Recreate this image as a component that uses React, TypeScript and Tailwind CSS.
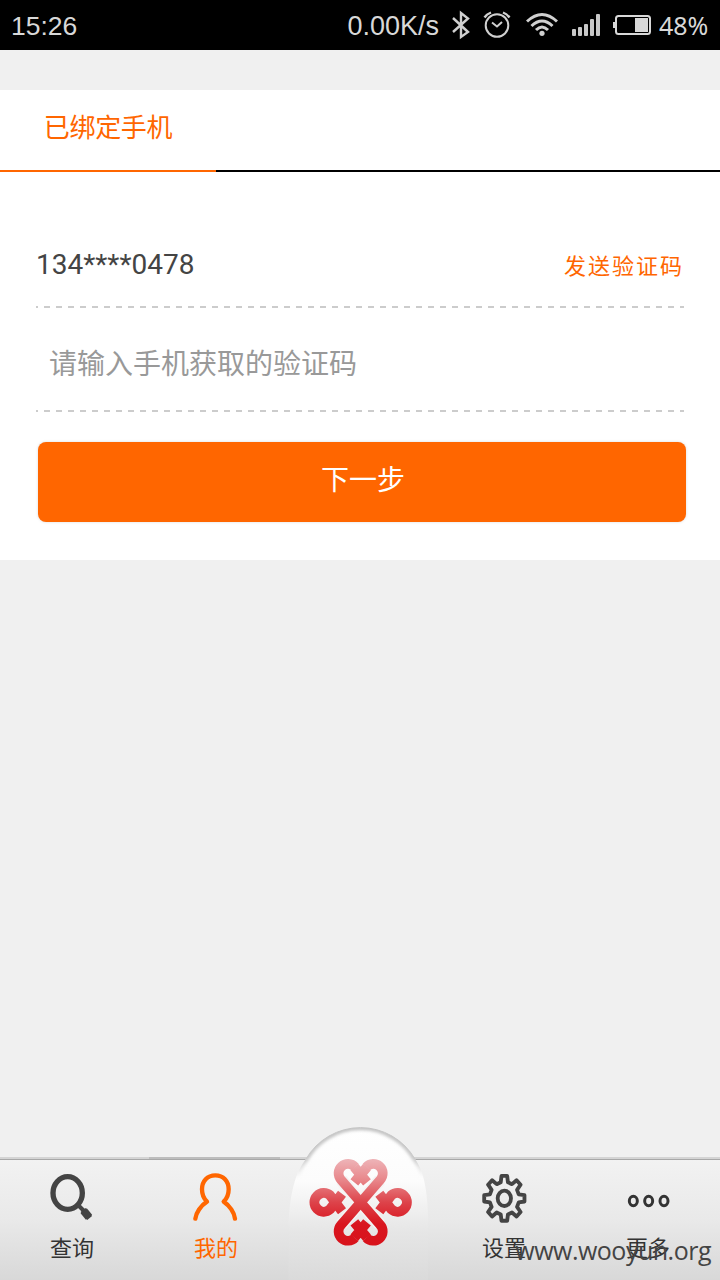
import type { ReactNode } from 'react'

const cjk = "font-['Roboto','Noto_Sans_CJK_SC',sans-serif]"

function StatusBar() {
  return (
    <header className="h-[50px] shrink-0 bg-black flex items-center pl-[11px] pr-3 text-[#d8d8d8] font-['Liberation_Sans',sans-serif]">
      <span className="text-[26.5px] leading-[50px] pt-[2px]">15:26</span>
      <div className="ml-auto flex items-center">
        <span className="text-[27px] leading-[50px] pt-[2px]">0.00K/s</span>
        <svg className="ml-3 w-5 h-[50px]" viewBox="0 0 20 50" fill="none" stroke="#d0d0d0" strokeWidth="2.4">
          <path d="M2 18 L17 32 L10 37 V13 L17 18.5 L2 32" />
        </svg>
        <svg className="ml-3 w-7 h-[50px]" viewBox="0 0 28 50" fill="none" stroke="#d0d0d0" strokeWidth="2">
          <circle cx="14" cy="25.5" r="11.3" />
          <path d="M9 22.5 L14 26.5 L19 22" />
          <path d="M1.5 17.5 Q4 14 8 12.5 M26.5 17.5 Q24 14 20 12.5" strokeWidth="2.4" />
        </svg>
        <svg className="ml-[15px] w-8 h-[50px]" viewBox="0 0 32 50" fill="none" stroke="#d0d0d0" strokeWidth="3">
          <path d="M1 21.5 Q16 7.5 31 21.5" />
          <path d="M5.5 26 Q16 16 26.5 26" />
          <path d="M10 30 Q16 24 22 30" />
          <circle cx="16" cy="33.3" r="2.6" fill="#d0d0d0" stroke="none" />
        </svg>
        <div className="ml-[14px] h-[22px] flex items-end gap-[2px]">
          <i className="w-1 h-[7px] bg-[#c8c8c8] rounded-[1px]" />
          <i className="w-1 h-[9px] bg-[#c8c8c8] rounded-[1px]" />
          <i className="w-1 h-3 bg-[#c8c8c8] rounded-[1px]" />
          <i className="w-1 h-[17px] bg-[#c8c8c8] rounded-[1px]" />
          <i className="w-1 h-[22px] bg-[#c8c8c8] rounded-[1px]" />
        </div>
        <svg className="ml-[13px] w-[38px] h-[50px]" viewBox="0 0 38 50">
          <rect x="3" y="16" width="34" height="18" rx="2.5" fill="none" stroke="#d8d8d8" strokeWidth="2" />
          <rect x="0" y="22" width="3" height="6" fill="#d8d8d8" />
          <rect x="22" y="18" width="13" height="14" fill="#d8d8d8" />
        </svg>
        <span className="ml-2 w-[49px] text-[25px] leading-[48px] whitespace-nowrap font-['Noto_Sans',sans-serif]">48%</span>
      </div>
    </header>
  )
}

function DashedLine() {
  return (
    <div className="h-[2px] bg-[repeating-linear-gradient(90deg,#ccc_0_2px,transparent_2px_8px,#ccc_8px_12px)]" />
  )
}

function BindForm() {
  return (
    <section className="mt-10 h-[470px] bg-white">
      <div className="flex h-[82px]">
        <div className="w-[216px] border-b-2 border-[#ff6600] text-[#ff6600] text-center text-[26px] leading-[76px]">
          <span className="tracking-[-0.3px]">已绑定手机</span>
        </div>
        <div className="flex-1 border-b-2 border-black" />
      </div>
      <div className="px-9">
        <div className="h-[134px] flex justify-between">
          <span className="text-[28px] text-[#444] leading-[185px]">134****0478</span>
          <button className="h-[190px] text-[22px] leading-[190px] tracking-[2px] text-[#ff6600]">发送验证码</button>
        </div>
        <DashedLine />
        <div className="h-[102px] pl-[13px] text-[28px] leading-[113px] text-[#999]">请输入手机获取的验证码</div>
        <DashedLine />
      </div>
      <button className="mt-[30px] ml-[38px] pl-[2px] pb-[3px] block w-[648px] h-20 rounded-lg bg-[#ff6600] text-white text-[28px] leading-[74px] shadow-[0_0_3px_rgba(0,0,0,0.15)]">
        下一步
      </button>
    </section>
  )
}

function SearchIcon() {
  return (
    <svg className="w-12 h-[52px]" viewBox="144 81 144 156" fill="none" stroke="#444">
      <ellipse cx="203" cy="144" rx="44" ry="49" strokeWidth="16" />
      <path d="M234 180 L252 198" strokeWidth="12" />
      <path d="M249 195 L269 219" strokeWidth="19" />
      <path d="M251 197 L267 217" strokeWidth="24" />
    </svg>
  )
}

function UserIcon() {
  return (
    <svg className="w-12 h-[52px]" viewBox="576 81 144 156" fill="none" stroke="#ff6600" strokeWidth="13" strokeLinecap="round" strokeLinejoin="round">
      <path d="M586 221 C588 203 602 182 621 170 C610 160 606 148 606 133 C606 108 622 91 646 91 C670 91 686 108 686 133 C686 148 682 160 671 170 C689 182 703 203 705 221" />
    </svg>
  )
}

function gearPath() {
  const points: string[] = []
  for (let i = 0; i < 8; i++) {
    const steps = [[-14, 0.73], [-8, 1], [8, 1], [14, 0.73]]
    for (const [offset, r] of steps) {
      const a = ((i * 45 + offset) * Math.PI) / 180
      points.push(`${(223 + 61 * r * Math.sin(a)).toFixed(1)} ${(160 - 68 * r * Math.cos(a)).toFixed(1)}`)
    }
  }
  return `M${points.join('L')}Z`
}

function GearIcon() {
  return (
    <svg className="w-12 h-[52px]" viewBox="150 81 144 156" fill="none" stroke="#444" strokeWidth="11.5" strokeLinejoin="round">
      <path d={gearPath()} />
      <ellipse cx="223" cy="160" rx="20" ry="23" />
    </svg>
  )
}

function MoreIcon() {
  return (
    <svg className="w-12 h-[52px]" viewBox="582 81 144 156" fill="none" stroke="#333" strokeWidth="9">
      <ellipse cx="610" cy="168" rx="12" ry="14" />
      <ellipse cx="656" cy="168" rx="12" ry="14" />
      <ellipse cx="702" cy="168" rx="12" ry="14" />
    </svg>
  )
}

function NavItem({ label, icon, active }: { label: string; icon: ReactNode; active?: boolean }) {
  return (
    <div className={`flex-1 flex flex-col items-center pt-3 text-[22px] leading-[49px] ${active ? 'text-[#ff6600]' : 'text-[#333]'}`}>
      {icon}
      <span>{label}</span>
    </div>
  )
}

// Raised dome with the knot logo, sits over the middle of the nav bar
function CenterButton() {
  return (
    <svg className="absolute left-[280px] bottom-0 w-40 h-[165px]" viewBox="0 0 480 495" fill="none">
      <defs>
        <linearGradient id="dome" x1="0" y1="38" x2="0" y2="495" gradientUnits="userSpaceOnUse">
          <stop offset="0" stopColor="#fff" />
          <stop offset="0.35" stopColor="#fcfcfc" />
          <stop offset="0.68" stopColor="#e6e6e6" />
          <stop offset="1" stopColor="#dadada" />
        </linearGradient>
        <linearGradient id="rim" x1="0" y1="38" x2="0" y2="190" gradientUnits="userSpaceOnUse">
          <stop offset="0" stopColor="#c4c4c4" />
          <stop offset="0.6" stopColor="#c8c8c8" />
          <stop offset="1" stopColor="#dcdcdc" stopOpacity="0" />
        </linearGradient>
        <linearGradient id="knot" x1="0" y1="132" x2="0" y2="392" gradientUnits="userSpaceOnUse">
          <stop offset="0" stopColor="#eeb4b8" />
          <stop offset="0.25" stopColor="#e88589" />
          <stop offset="0.5" stopColor="#dd434a" />
          <stop offset="0.75" stopColor="#d9161f" />
          <stop offset="1" stopColor="#d8121b" />
        </linearGradient>
        <filter id="soft" x="-10%" y="-10%" width="120%" height="120%">
          <feGaussianBlur stdDeviation="5" />
        </filter>
        <clipPath id="domeClip">
          <path d="M25 495 V340 C28 240 46 170 78 132 A189 189 0 0 1 405 132 C434 170 445 240 445 340 V495 Z" />
        </clipPath>
      </defs>
      <g clipPath="url(#domeClip)">
        <rect width="480" height="495" fill="url(#dome)" />
        <path d="M36 240 C44 190 58 156 78 132 A189 189 0 0 1 405 132 C425 156 438 190 444 240" stroke="url(#rim)" strokeWidth="16" filter="url(#soft)" />
      </g>
      <path d="M78 132 A189 189 0 0 1 405 132" stroke="url(#rim)" strokeWidth="3" />
      <g stroke="url(#knot)" strokeWidth="30">
        <path d="M186 289 L150 241 A28 28 0 1 0 150 283 L186 236" />
        <path d="M298 289 L334 241 A28 28 0 1 1 334 283 L298 236" />
        <path d="M223 156 L261 202 M261 156 L223 202 M223 368 L261 322 M261 368 L223 322" />
      </g>
      <path d="M184 195 L300 329 M300 195 L184 329" stroke="#f4f4f4" strokeWidth="38" />
      <g stroke="url(#knot)" strokeWidth="29">
        <path d="M225 156 A28 28 0 1 0 183 194 L301 330 A28 28 0 1 1 259 368" />
        <path d="M259 156 A28 28 0 1 1 301 194 L183 330 A28 28 0 1 0 225 368" />
      </g>
    </svg>
  )
}

function BottomNav() {
  return (
    <nav className="relative mt-auto">
      <div className="flex h-[3px] bg-[#d4d4d4] border-b border-[#a8a8a8]">
        <div className="ml-[149px] w-[131px] bg-[#bdbdbd]" />
      </div>
      <div className="h-[120px] flex bg-linear-to-b from-[#f2f2f2] via-[#e9e9e9] to-[#d8d8d8]">
        <NavItem label="查询" icon={<SearchIcon />} />
        <NavItem label="我的" icon={<UserIcon />} active />
        <div className="flex-1" />
        <NavItem label="设置" icon={<GearIcon />} />
        <NavItem label="更多" icon={<MoreIcon />} />
      </div>
      <CenterButton />
      <span className="absolute right-[9px] bottom-3 text-[25px] leading-9 tracking-[-0.5px] text-[#444] font-['Open_Sans',sans-serif]">
        www.wooyun.org
      </span>
    </nav>
  )
}

export default function App() {
  return (
    <div className={`w-[720px] h-[1280px] overflow-hidden flex flex-col bg-[#f0f0f0] ${cjk}`}>
      <StatusBar />
      <BindForm />
      <BottomNav />
    </div>
  )
}
